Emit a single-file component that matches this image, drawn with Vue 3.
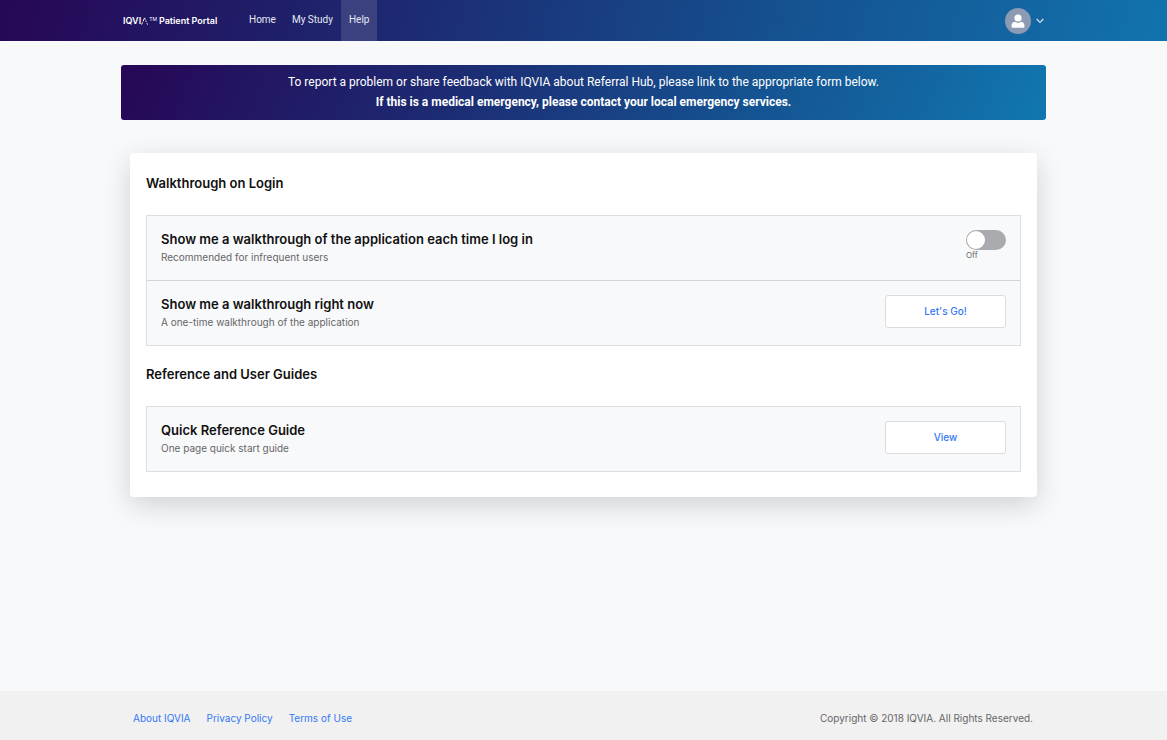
<script setup>
import { ref } from 'vue'

const walkthroughOnLogin = ref(false)
const navItems = [
  { label: 'Home', active: false },
  { label: 'My Study', active: false },
  { label: 'Help', active: true }
]
const footerLinks = ['About IQVIA', 'Privacy Policy', 'Terms of Use']
</script>

<template>
  <div class="page">
    <header class="topbar">
      <div class="container topbar-inner">
        <a class="brand" href="#" aria-label="IQVIA Patient Portal">
          <span>IQVI</span>
          <svg class="brand-a" viewBox="0 0 8 8" aria-hidden="true">
            <path d="M0.6 7.6 L1.5 5.5 M2.1 4.4 L3.4 1.2" />
            <path d="M3.6 0.9 L4.3 2.4 M4.8 3.6 L5.4 5 M5.9 6.2 L6.5 7.6" />
          </svg>
          <span class="tm">TM</span>
          <span>Patient Portal</span>
        </a>
        <nav class="nav">
          <a
            v-for="item in navItems"
            :key="item.label"
            href="#"
            :class="['nav-link', { active: item.active }]"
          >{{ item.label }}</a>
        </nav>
        <button class="account" type="button" aria-label="Account menu">
          <svg class="avatar" viewBox="0 0 26 26" aria-hidden="true">
            <circle cx="13" cy="13" r="13" fill="#8c9bb3" />
            <circle cx="13" cy="10" r="3.6" fill="#fff" />
            <path d="M6.5 18.200c0-2.600 1.400-4.200 3.300-4.400 1 .8 2 1.100 3.200 1.100s2.200-.3 3.200-1.100c1.900.2 3.300 1.800 3.300 4.400 0 1-.6 1.500-1.500 1.500H8c-.9 0-1.500-.5-1.500-1.500z" fill="#fff" />
          </svg>
          <svg class="chevron" viewBox="0 0 8 6" aria-hidden="true">
            <path d="M0.700 1 L4 4.300 L7.300 1" />
          </svg>
        </button>
      </div>
    </header>

    <main class="container main">
      <div class="banner">
        <p>To report a problem or share feedback with IQVIA about Referral Hub, please link to the appropriate form below.</p>
        <p><strong>If this is a medical emergency, please contact your local emergency services.</strong></p>
      </div>

      <div class="card">
        <section>
          <h2>Walkthrough on Login</h2>
          <div class="rows">
            <div class="row">
              <div>
                <h3 id="login-walkthrough">Show me a walkthrough of the application each time I log in</h3>
                <p>Recommended for infrequent users</p>
              </div>
              <label class="switch">
                <input v-model="walkthroughOnLogin" type="checkbox" role="switch" aria-labelledby="login-walkthrough">
                <span>{{ walkthroughOnLogin ? 'On' : 'Off' }}</span>
              </label>
            </div>
            <div class="row">
              <div>
                <h3>Show me a walkthrough right now</h3>
                <p>A one-time walkthrough of the application</p>
              </div>
              <button class="action" type="button">Let's Go!</button>
            </div>
          </div>
        </section>
        <section>
          <h2>Reference and User Guides</h2>
          <div class="rows">
            <div class="row">
              <div>
                <h3>Quick Reference Guide</h3>
                <p>One page quick start guide</p>
              </div>
              <button class="action" type="button">View</button>
            </div>
          </div>
        </section>
      </div>
    </main>

    <footer class="footer">
      <div class="container footer-inner">
        <nav class="footer-links">
          <a v-for="link in footerLinks" :key="link" href="#">{{ link }}</a>
        </nav>
        <span>Copyright © 2018 IQVIA. All Rights Reserved.</span>
      </div>
    </footer>
  </div>
</template>

<style>
body {
  margin: 0;
  background: #f8f9fb;
}
</style>

<style scoped>
.page {
  display: flex;
  flex-direction: column;
  min-height: 100vh;
  background: #f8f9fb;
  color: #111;
  font-family: Inter, "Liberation Sans", sans-serif;
  font-size: 10px;
}
h2, h3, p {
  margin: 0;
}
a {
  text-decoration: none;
}
.container {
  box-sizing: border-box;
  width: 100%;
  max-width: 925px;
  margin: 0 auto;
}
.topbar {
  background: linear-gradient(105deg, #270757 0%, #1d2870 33%, #15508f 66%, #1173ad 100%);
}
.topbar-inner {
  display: flex;
  align-items: stretch;
  height: 41px;
}
.brand {
  display: flex;
  align-items: center;
  width: 120px;
  padding-left: 2px;
  box-sizing: border-box;
  color: #fff;
  font-size: 9px;
  font-weight: 600;
  white-space: nowrap;
}
.brand-a {
  width: 8px;
  height: 8px;
  fill: none;
  stroke: #fff;
  stroke-width: 1;
}
.tm {
  margin-right: 2px;
  padding-bottom: 3px;
  font-size: 5px;
  font-weight: 400;
}
.nav {
  display: flex;
}
.nav-link {
  display: flex;
  align-items: center;
  padding: 0 8px 2px;
  color: #e6e8f2;
  font-family: Roboto, "Liberation Sans", sans-serif;
}
.nav-link.active {
  background: #3b417f;
}
.account {
  display: flex;
  align-items: center;
  gap: 5px;
  margin-left: auto;
  padding: 0 2px 0 0;
  border: 0;
  background: none;
  cursor: pointer;
}
.avatar {
  width: 26px;
  height: 26px;
}
.chevron {
  width: 8px;
  height: 6px;
  fill: none;
  stroke: #d5e4f0;
  stroke-width: 1.2;
}
.main {
  flex: 1;
  padding: 24px 0;
}
.banner {
  padding: 7px 16px 8px;
  border-radius: 3px;
  background: linear-gradient(115deg, #270757 0%, #1d2870 33%, #15508f 66%, #1177b0 100%);
  color: #fff;
  font-family: Roboto, "Liberation Sans", sans-serif;
  font-size: 12px;
  line-height: 20px;
  text-align: center;
}
.card {
  display: grid;
  gap: 14px;
  margin: 33px 9px 0;
  padding: 16px 16px 25px;
  border-radius: 4px;
  background: #fff;
  box-shadow: 0 8px 28px rgba(0, 0, 0, 0.16);
}
h2 {
  margin-bottom: 18px;
  font-size: 13px;
  font-weight: 600;
  line-height: 28px;
}
.rows {
  border: 1px solid #dcdee1;
  background: #f8f9fb;
}
.row {
  display: flex;
  justify-content: space-between;
  align-items: flex-start;
  padding: 14px;
}
.row + .row {
  border-top: 1px solid #d3d5d8;
}
h3 {
  font-size: 13px;
  font-weight: 600;
  line-height: 18px;
}
.row p {
  color: #666;
  line-height: 18px;
}
.switch {
  display: flex;
  flex-direction: column;
  color: #666;
  font-size: 8px;
  line-height: 10px;
}
.switch input {
  appearance: none;
  width: 40px;
  height: 20px;
  margin: 0;
  padding: 1px;
  border-radius: 10px;
  background: #a9abae;
  cursor: pointer;
}
.switch input::before {
  content: "";
  display: block;
  width: 18px;
  height: 18px;
  border-radius: 50%;
  background: #fff;
}
.switch input:checked {
  padding-left: 21px;
  background: #3478f6;
}
.action {
  width: 121px;
  height: 33px;
  padding: 0 0 2px;
  border: 1px solid #d9dbde;
  border-radius: 3px;
  background: #fff;
  color: #3478f6;
  font-family: inherit;
  font-size: 10px;
  font-weight: 500;
  cursor: pointer;
}
.footer {
  background: #f1f1f1;
  color: #666;
}
.footer-inner {
  display: flex;
  align-items: center;
  justify-content: space-between;
  padding: 21px 13px 15px 12px;
  line-height: 13px;
}
.footer-links {
  display: flex;
  gap: 16px;
}
.footer-links a {
  color: #3478f6;
}
</style>
